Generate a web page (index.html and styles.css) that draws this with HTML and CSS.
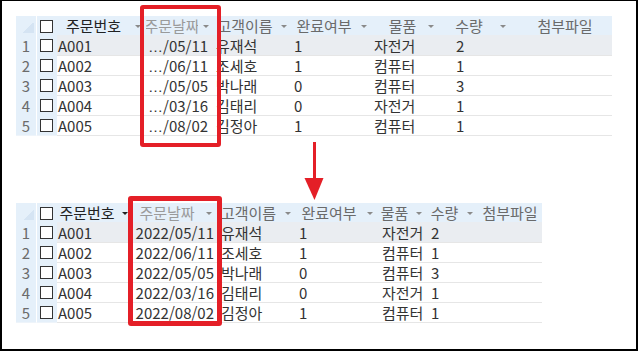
FILE: index.html
```html
<!DOCTYPE html>
<html lang="ko">
<head>
<meta charset="utf-8">
<title>주문 테이블</title>
<link rel="stylesheet" href="styles.css">
</head>
<body>
<div class="frame">
  <div class="sheet top">
    <div class="row head">
      <div class="corner"></div>
      <div class="sel"><span class="box"></span></div>
      <div class="hd c-id"><span class="lbl">주문번호</span><i class="dd"></i></div>
      <div class="hd c-date"><span class="lbl">주문날짜</span><i class="dd"></i></div>
      <div class="hd c-name"><span class="lbl">고객이름</span><i class="dd"></i></div>
      <div class="hd c-done"><span class="lbl">완료여부</span><i class="dd"></i></div>
      <div class="hd c-item"><span class="lbl">물품</span><i class="dd"></i></div>
      <div class="hd c-qty"><span class="lbl">수량</span><i class="dd"></i></div>
      <div class="hd c-file"><span class="lbl">첨부파일</span></div>
    </div>
    <div class="row current">
      <div class="rn">1</div><div class="sel"><span class="box"></span></div>
      <div class="cell c-id">A001</div><div class="cell c-date"><span class="ell">…</span>/05/11</div><div class="cell c-name">유재석</div><div class="cell c-done">1</div><div class="cell c-item">자전거</div><div class="cell c-qty">2</div><div class="cell c-file"></div>
    </div>
    <div class="row">
      <div class="rn">2</div><div class="sel"><span class="box"></span></div>
      <div class="cell c-id">A002</div><div class="cell c-date"><span class="ell">…</span>/06/11</div><div class="cell c-name">조세호</div><div class="cell c-done">1</div><div class="cell c-item">컴퓨터</div><div class="cell c-qty">1</div><div class="cell c-file"></div>
    </div>
    <div class="row">
      <div class="rn">3</div><div class="sel"><span class="box"></span></div>
      <div class="cell c-id">A003</div><div class="cell c-date"><span class="ell">…</span>/05/05</div><div class="cell c-name">박나래</div><div class="cell c-done">0</div><div class="cell c-item">컴퓨터</div><div class="cell c-qty">3</div><div class="cell c-file"></div>
    </div>
    <div class="row">
      <div class="rn">4</div><div class="sel"><span class="box"></span></div>
      <div class="cell c-id">A004</div><div class="cell c-date"><span class="ell">…</span>/03/16</div><div class="cell c-name">김태리</div><div class="cell c-done">0</div><div class="cell c-item">자전거</div><div class="cell c-qty">1</div><div class="cell c-file"></div>
    </div>
    <div class="row">
      <div class="rn">5</div><div class="sel"><span class="box"></span></div>
      <div class="cell c-id">A005</div><div class="cell c-date"><span class="ell">…</span>/08/02</div><div class="cell c-name">김정아</div><div class="cell c-done">1</div><div class="cell c-item">컴퓨터</div><div class="cell c-qty">1</div><div class="cell c-file"></div>
    </div>
    <div class="mark"></div>
  </div>

  <div class="pointer">
    <svg width="20" height="58" viewBox="0 0 20 58">
      <rect x="9" y="0" width="3" height="37" fill="#e41f27"/>
      <polygon points="0.5,36 19.5,36 10.5,58" fill="#e41f27"/>
    </svg>
  </div>

  <div class="sheet bottom">
    <div class="row head">
      <div class="corner"></div>
      <div class="sel"><span class="box"></span></div>
      <div class="hd c-id"><span class="lbl">주문번호</span><i class="dd dark"></i></div>
      <div class="hd c-date"><span class="lbl">주문날짜</span><i class="dd"></i></div>
      <div class="hd c-name"><span class="lbl">고객이름</span><i class="dd"></i></div>
      <div class="hd c-done"><span class="lbl">완료여부</span><i class="dd"></i></div>
      <div class="hd c-item"><span class="lbl">물품</span><i class="dd"></i></div>
      <div class="hd c-qty"><span class="lbl">수량</span><i class="dd"></i></div>
      <div class="hd c-file"><span class="lbl">첨부파일</span></div>
    </div>
    <div class="row current">
      <div class="rn">1</div><div class="sel"><span class="box"></span></div>
      <div class="cell c-id">A001</div><div class="cell c-date">2022/05/11</div><div class="cell c-name">유재석</div><div class="cell c-done">1</div><div class="cell c-item">자전거</div><div class="cell c-qty">2</div><div class="cell c-file"></div>
    </div>
    <div class="row">
      <div class="rn">2</div><div class="sel"><span class="box"></span></div>
      <div class="cell c-id">A002</div><div class="cell c-date">2022/06/11</div><div class="cell c-name">조세호</div><div class="cell c-done">1</div><div class="cell c-item">컴퓨터</div><div class="cell c-qty">1</div><div class="cell c-file"></div>
    </div>
    <div class="row">
      <div class="rn">3</div><div class="sel"><span class="box"></span></div>
      <div class="cell c-id">A003</div><div class="cell c-date">2022/05/05</div><div class="cell c-name">박나래</div><div class="cell c-done">0</div><div class="cell c-item">컴퓨터</div><div class="cell c-qty">3</div><div class="cell c-file"></div>
    </div>
    <div class="row">
      <div class="rn">4</div><div class="sel"><span class="box"></span></div>
      <div class="cell c-id">A004</div><div class="cell c-date">2022/03/16</div><div class="cell c-name">김태리</div><div class="cell c-done">0</div><div class="cell c-item">자전거</div><div class="cell c-qty">1</div><div class="cell c-file"></div>
    </div>
    <div class="row">
      <div class="rn">5</div><div class="sel"><span class="box"></span></div>
      <div class="cell c-id">A005</div><div class="cell c-date">2022/08/02</div><div class="cell c-name">김정아</div><div class="cell c-done">1</div><div class="cell c-item">컴퓨터</div><div class="cell c-qty">1</div><div class="cell c-file"></div>
    </div>
    <div class="mark"></div>
  </div>
</div>
</body>
</html>
```

FILE: styles.css
```css
* { box-sizing: border-box; }

html, body {
  margin: 0;
  padding: 0;
  background: #fff;
}

body {
  font-family: "Noto Sans CJK KR", "Noto Sans", sans-serif;
  font-size: 15px;
  line-height: 19px;
  color: #333;
}

.frame {
  width: 638px;
  height: 351px;
  border-style: solid;
  border-color: #000;
  border-width: 1px 2px 2px 2px;
  padding: 15px 0 0 14px;
  overflow: hidden;
}

.sheet {
  position: relative;
  width: fit-content;
}

.top { --cols: 20px 21px 89px 68px 78px 80px 80px 66px 94px; }
.bottom { --cols: 20px 21px 76px 84px 79px 82px 49px 51px 64px; }

.row {
  display: grid;
  grid-template-columns: var(--cols);
  height: 20px;
}

.row.head {
  height: 19px;
  background: #e5f0fa;
}

.corner {
  background: linear-gradient(135deg, #e5f0fa 50%, #d5e4f3 50%);
  background-size: 12px 10px;
  background-repeat: no-repeat;
  background-position: right 2px bottom 2px;
}

.sel {
  background: #e5f0fa;
  border-left: 1px solid #fff;
  border-bottom: 1px solid #eef4fa;
  display: flex;
  align-items: center;
  padding: 1px 0 0 3px;
}
.head .sel { border-bottom: 0; }

.box {
  width: 13px;
  height: 13px;
  border: 1px solid #333;
  background: #fff;
}

.rn {
  background: #e5f0fa;
  border-bottom: 1px solid #eef4fa;
  color: #6b6b6b;
  text-align: center;
  padding-top: 1px;
}

.hd {
  display: flex;
  align-items: center;
  overflow: hidden;
  min-width: 0;
}

.lbl {
  flex: 1;
  min-width: 0;
  display: flex;
  justify-content: center;
  overflow: hidden;
  white-space: nowrap;
  color: #6a6a6a;
}

.hd.c-id .lbl { color: #222; }
.hd.c-date .lbl { color: #9a9a9a; }

.dd {
  flex: none;
  width: 16px;
  height: 100%;
  display: flex;
  align-items: center;
  justify-content: center;
  background: #e5f0fa;
}
.dd::before {
  content: "";
  border-left: 3px solid transparent;
  border-right: 3px solid transparent;
  border-top: 3px solid #8a8a8a;
  margin-top: 1px;
}
.dd.dark::before { border-top-color: #222; }

.top .c-item .dd { margin-right: 13px; }
.top .c-item .lbl { padding-left: 10px; }
.top .c-qty .dd { margin-right: 7px; }
.top .c-qty .lbl { padding-right: 9px; }

.cell {
  padding: 1px 0 0 2px;
  border-bottom: 1px solid #e6e6e6;
  white-space: nowrap;
  overflow: hidden;
  color: #333;
}

.ell {
  font-family: "Liberation Sans", sans-serif;
  letter-spacing: -1px;
  margin-right: 1px;
}

.cell.c-date { text-align: right; padding-right: 7px; }
.bottom .cell.c-date { padding-right: 3px; }
.bottom .cell.c-name,
.bottom .cell.c-item,
.bottom .cell.c-qty { padding-left: 4px; }
.bottom .cell.c-done { padding-left: 3px; }
.top .cell.c-qty { padding-left: 4px; }
.cell.c-id { padding-left: 1px; }

.current .cell { background: #eaedf1; }

.mark {
  position: absolute;
  border: 4px solid #e41f27;
  border-radius: 3px;
}
.top .mark { left: 124px; top: -11px; width: 81px; height: 142px; }
.bottom .mark { left: 112px; top: -7px; width: 94px; height: 130px; border-width: 5px; }

.pointer {
  margin: 7px 0 3px 288px;
  height: 58px;
}
.pointer svg { display: block; }
```
